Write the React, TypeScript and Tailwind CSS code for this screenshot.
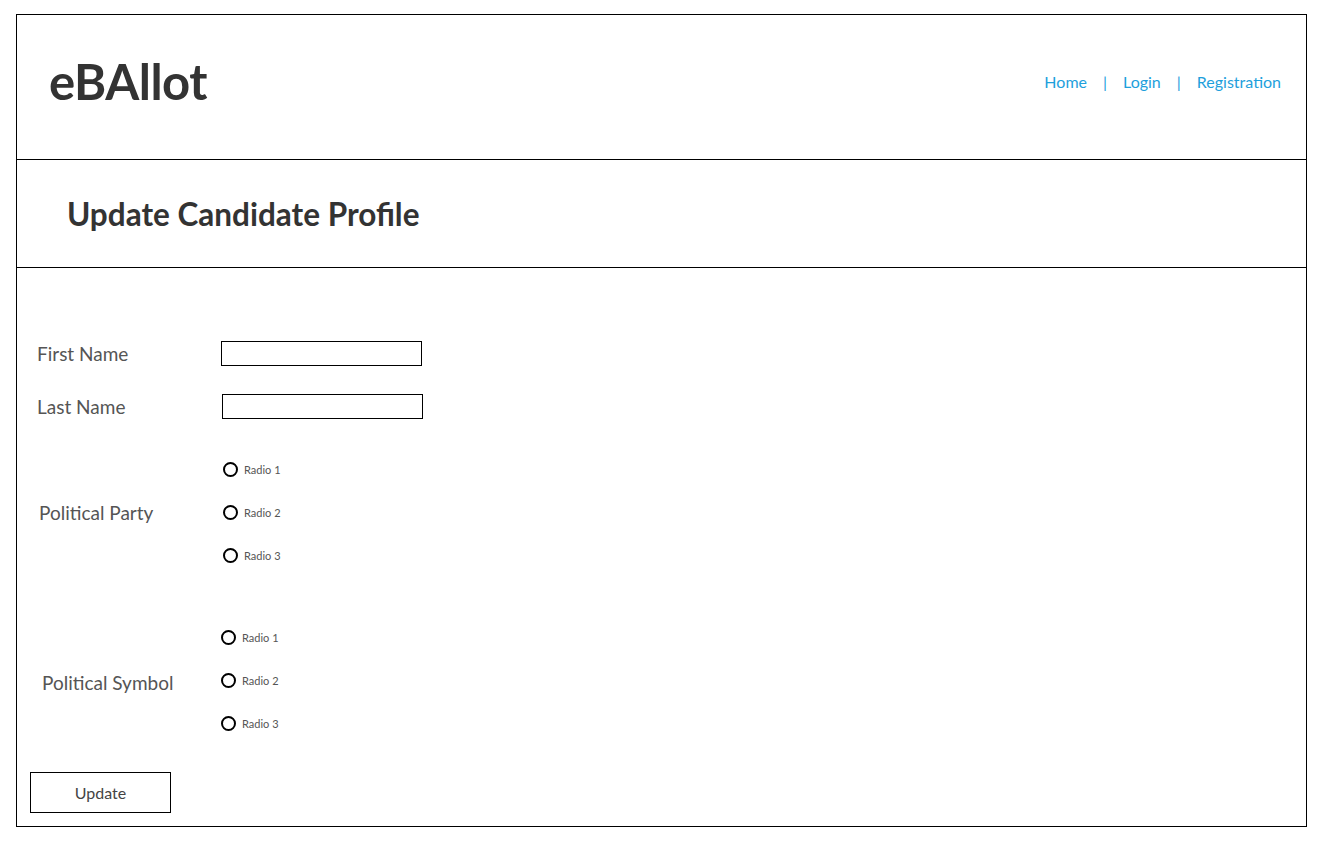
export default function App() {
  const radios = ['Radio 1', 'Radio 2', 'Radio 3'];

  return (
    <div className="min-h-screen bg-white pt-[14px] pl-[16px] font-['Lato',sans-serif] text-[#333]">
      <div className="w-[1291px] h-[813px] border border-black flex flex-col">
        {/* Header */}
        <header className="h-[145px] border-b border-black flex items-center justify-between pl-[32px] pr-[25px]">
          <h1 className="text-[49px] font-bold leading-none tracking-[-0.5px] text-[#333] -mt-[11px]">eBAllot</h1>
          <nav className="flex items-center text-[16px] text-[#1ea0dc] -mt-[10px]">
            <span>Home</span>
            <span className="mx-[16px]">|</span>
            <span>Login</span>
            <span className="mx-[16px]">|</span>
            <span>Registration</span>
          </nav>
        </header>

        {/* Title */}
        <div className="h-[108px] border-b border-black flex items-center pl-[50px]">
          <h2 className="text-[31.5px] font-bold text-[#333] mt-[3px]">Update Candidate Profile</h2>
        </div>

        {/* Form */}
        <div className="flex-1 flex flex-col">
          <div className="mt-[73px] h-[25px] flex items-center">
            <label className="w-[204px] pl-[20px] text-[19px] leading-none text-[#555]">First Name</label>
            <input type="text" className="w-[201px] h-[25px] border border-black" />
          </div>

          <div className="mt-[28px] h-[25px] flex items-center">
            <label className="w-[205px] pl-[20px] text-[19px] leading-none text-[#555]">Last Name</label>
            <input type="text" className="w-[201px] h-[25px] border border-black" />
          </div>

          <div className="mt-[43px] flex items-center">
            <label className="w-[205px] pl-[22px] text-[19px] leading-none text-[#555]">Political Party</label>
            <div className="flex flex-col gap-[28px] ml-[1px]">
              {radios.map(r => (
                <div key={r} className="flex items-center h-[15px]">
                  <span className="w-[15px] h-[15px] rounded-full border-2 border-black" />
                  <span className="ml-[6px] text-[11px] leading-none text-[#555]">{r}</span>
                </div>
              ))}
            </div>
          </div>

          <div className="mt-[67px] flex items-center">
            <label className="w-[204px] pl-[25px] text-[19px] leading-none text-[#555] mt-[4px]">Political Symbol</label>
            <div className="flex flex-col gap-[28px]">
              {radios.map(r => (
                <div key={r} className="flex items-center h-[15px]">
                  <span className="w-[15px] h-[15px] rounded-full border-2 border-black" />
                  <span className="ml-[6px] text-[11px] leading-none text-[#555]">{r}</span>
                </div>
              ))}
            </div>
          </div>

          <button className="mt-[41px] ml-[13px] w-[141px] h-[41px] border border-black text-[16px] text-[#444] bg-white">
            Update
          </button>
        </div>
      </div>
    </div>
  );
}
